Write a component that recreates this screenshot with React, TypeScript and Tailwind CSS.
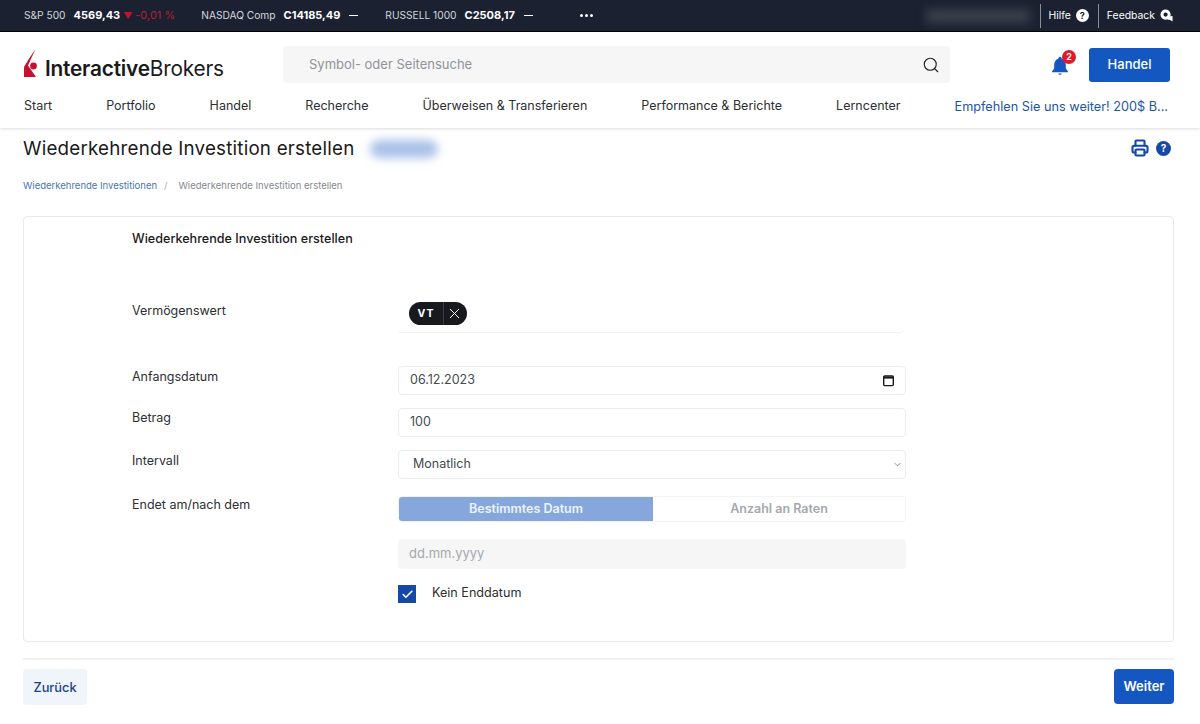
import { Search, Printer, Check, ChevronDown, X } from 'lucide-react';

const navItems = ['Start', 'Portfolio', 'Handel', 'Recherche', 'Überweisen & Transferieren', 'Performance & Berichte', 'Lerncenter'];

function Ticker({ name, value, className }: { name: string; value: string; className?: string }) {
  return (
    <div className={`flex items-center ${className ?? ''}`}>
      <span className="text-[10.2px] text-[#d5d8de]">{name}</span>
      <span className="ml-[8px] font-bold text-white">{value}</span>
    </div>
  );
}

function Logo() {
  return (
    <div className="flex items-end">
      <svg width="14" height="29" viewBox="0 0 14 29" className="mb-[3px] mr-[7px]">
        <path d="M11.5 0 L4.5 10.5 L0 18 L0 28 L12 28 L4 16.5 Z" fill="#c8102e" />
        <circle cx="9.5" cy="17" r="3.4" fill="#c8102e" />
      </svg>
      <span className="text-[20.8px] leading-[24px] tracking-[-0.2px] text-[#1a1a1a]">
        <span className="font-semibold">Interactive</span>Brokers
      </span>
    </div>
  );
}

function Field({ children, className }: { children: React.ReactNode; className?: string }) {
  return (
    <div className={`flex h-[29px] w-[508px] items-center rounded-[4px] border border-[#eceded] bg-white text-[12.5px] text-[#444a52] ${className ?? ''}`}>
      {children}
    </div>
  );
}

export default function App() {
  return (
    <div className="flex h-[724px] w-[1200px] flex-col overflow-hidden bg-white font-['Inter','Liberation_Sans',sans-serif]">
      <div className="flex h-[32px] shrink-0 items-center border-b border-black bg-[#1b2130] pl-[24px] pr-[27px] text-[11px]">
        <Ticker name="S&P 500" value="4569,43" />
        <span className="ml-[3px] text-[9px] text-[#c8102e]">▼</span>
        <span className="ml-[3px] text-[#b3202f]">-0,01 %</span>
        <Ticker name="NASDAQ Comp" value="C14185,49" className="ml-[26px]" />
        <span className="ml-[9px] h-[1px] w-[9px] bg-white" />
        <Ticker name="RUSSELL 1000" value="C2508,17" className="ml-[27px]" />
        <span className="ml-[9px] h-[1px] w-[9px] bg-white" />
        <div className="ml-[47px] flex gap-[2px]">
          <span className="size-[3px] rounded-full bg-white" />
          <span className="size-[3px] rounded-full bg-white" />
          <span className="size-[3px] rounded-full bg-white" />
        </div>
        <div className="ml-auto h-[14px] w-[104px] rounded-sm bg-[#3a3f4b] blur-[5px]" />
        <div className="ml-[10px] flex h-[24px] items-center border-l border-[#8a8e97] pl-[8px] text-[10.4px] text-white">
          Hilfe
          <span className="ml-[5px] flex size-[13px] items-center justify-center rounded-full bg-white text-[9px] font-bold text-[#1b2130]">?</span>
        </div>
        <div className="ml-[9px] flex h-[24px] items-center border-l border-[#8a8e97] pl-[8px] text-[10.4px] text-white">
          Feedback
          <svg width="13" height="13" viewBox="0 0 14 14" className="ml-[5px]">
            <path d="M6 0.5a5.5 5.5 0 1 0 0 11a5.5 5.5 0 0 0 0-11Zm0 3.2a2.3 2.3 0 1 1 0 4.6a2.3 2.3 0 0 1 0-4.6Z" fill="#fff" fillRule="evenodd" />
            <path d="M9.5 8 L13.5 7.5 L13.5 13.5 L10.5 11.5 L8 11.5 Z" fill="#fff" />
          </svg>
        </div>
      </div>

      <header className="flex h-[96px] shrink-0 flex-col pl-[24px] pr-[30px] shadow-[0_1px_3px_rgba(0,0,0,0.14)]">
        <div className="flex h-[64px] shrink-0 items-center pt-[1px]">
          <div className="w-[259px]">
            <Logo />
          </div>
          <div className="flex h-[37px] w-[667px] items-center rounded-[4px] bg-[#f6f6f7] pl-[26px] pr-[10px] text-[13px] text-[#8f9399]">
            Symbol- oder Seitensuche
            <Search size={18} strokeWidth={1.5} className="ml-auto text-[#222]" />
          </div>
          <div className="relative ml-[100px] mt-[1px]">
            <svg width="20" height="21" viewBox="0 0 24 24" fill="#1557c0">
              <path d="M12 1.5a2 2 0 0 0-2 2v.4C6.9 4.8 5 7.6 5 11v4.5L2.5 19v1h19v-1L19 15.5V11c0-3.4-1.9-6.2-5-7.1v-.4a2 2 0 0 0-2-2Z" />
              <path d="M9.8 21.5a2.3 2.3 0 0 0 4.4 0Z" />
            </svg>
            <span className="absolute -right-[6px] -top-[5px] flex size-[14px] items-center justify-center rounded-full bg-[#d81e2c] text-[9px] font-semibold text-white">2</span>
          </div>
          <button className="ml-auto h-[34px] w-[81px] rounded-[3px] bg-[#1557c0] text-[13px] font-medium text-white">Handel</button>
        </div>
        <nav className="mt-[1px] flex items-center text-[12.5px] text-[#2c2f33]">
          <div className="flex gap-[54px]">
            {navItems.map((item) => (
              <span key={item}>{item}</span>
            ))}
          </div>
          <span className="ml-auto mr-[2px] text-[12.7px] text-[#1a56a8]">Empfehlen Sie uns weiter! 200$ B...</span>
        </nav>
      </header>

      <main className="flex min-h-0 flex-1 flex-col pl-[23px] pr-[26px]">
        <div className="mt-[10px] flex h-[22px] shrink-0 items-center">
          <h1 className="text-[18.8px] font-normal tracking-[0.2px] text-[#1a1a1a]">Wiederkehrende Investition erstellen</h1>
          <div className="ml-[16px] h-[18px] w-[68px] rounded-full bg-[#a9c1e8] blur-[5px]" />
          <Printer size={18} strokeWidth={2.8} className="mb-[2px] ml-auto text-[#1449a8]" />
          <span className="mb-[2px] ml-[7px] mr-[3px] flex size-[15px] items-center justify-center rounded-full bg-[#1449a8] text-[10px] font-bold text-white">?</span>
        </div>

        <div className="mt-[19px] flex shrink-0 items-center text-[9.5px]">
          <span className="text-[#4a74b4]">Wiederkehrende Investitionen</span>
          <span className="ml-[7px] text-[#a9adb3]">/</span>
          <span className="ml-[11px] text-[#85898f]">Wiederkehrende Investition erstellen</span>
        </div>

        <section className="mt-[23px] h-[426px] shrink-0 rounded-[4px] border border-[#e8e9eb] pl-[108px] pt-[13px] text-[12.5px] text-[#2c2f33]">
          <h2 className="text-[12.6px] font-medium text-[#1a1a1a]">Wiederkehrende Investition erstellen</h2>

          <div className="mt-[51px] grid grid-cols-[266px_508px]">
            <span className="pt-[2px]">Vermögenswert</span>
            <div className="h-[32px] w-[506px] rounded-[4px] pl-[11px] shadow-[0_1px_1px_rgba(0,0,0,0.06)]">
              <div className="mt-[2px] flex h-[23px] w-[58px] items-center rounded-full bg-[#17191f] text-white">
                <span className="w-[35px] border-r border-[#3a3d44] text-center text-[10.5px] font-bold tracking-[1px] leading-[23px]">VT</span>
                <X size={17} strokeWidth={1.4} className="ml-[2px]" />
              </div>
            </div>

            <span className="mt-[36px]">Anfangsdatum</span>
            <Field className="mt-[34px] pl-[11px] pr-[10px]">
              06.12.2023
              <svg width="13" height="13" viewBox="0 0 13 13" className="ml-auto" fill="none" stroke="#1a1a1a" strokeWidth="1.4">
                <rect x="1.7" y="2" width="9.6" height="9.6" rx="1" />
                <path d="M1.7 3.6h9.6" strokeWidth="2" />
              </svg>
            </Field>

            <span className="mt-[14px]">Betrag</span>
            <Field className="mt-[13px] pl-[11px]">100</Field>

            <span className="mt-[15px]">Intervall</span>
            <Field className="mt-[13px] pl-[14px] pr-[2px]">
              Monatlich
              <ChevronDown size={11} strokeWidth={1.5} className="ml-auto text-[#666]" />
            </Field>

            <span className="mt-[17px]">Endet am/nach dem</span>
            <div className="mt-[17px] flex h-[26px] w-[508px] overflow-hidden rounded-[4px] border border-[#f3f3f4] text-[12.5px] font-semibold">
              <div className="flex w-[254px] items-center justify-center bg-[#85a7dc] text-[#eef3fb]">Bestimmtes Datum</div>
              <div className="flex flex-1 items-center justify-center bg-white text-[#a5a8ad]">Anzahl an Raten</div>
            </div>

            <span />
            <div className="mt-[17px] flex h-[30px] w-[508px] items-center rounded-[4px] bg-[#f6f6f7] pl-[11px] text-[13px] text-[#a5a8ad]">dd.mm.yyyy</div>

            <span />
            <div className="mt-[16px] flex items-center">
              <span className="flex size-[18px] items-center justify-center bg-[#1449a8]">
                <Check size={13} strokeWidth={3} className="text-white" />
              </span>
              <span className="ml-[16px] -mt-[2px] text-[12.6px]">Kein Enddatum</span>
            </div>
          </div>
        </section>

        <div className="mt-[16px] flex shrink-0 items-start justify-between border-t-2 border-[#f1f2f3] pt-[9px]">
          <button className="h-[36px] w-[64px] rounded-[4px] bg-[#f0f4fb] text-[12.8px] font-medium text-[#1e3f8c]">Zurück</button>
          <button className="h-[35px] w-[60px] rounded-[4px] bg-[#1557c0] text-[13px] font-semibold text-white">Weiter</button>
        </div>
      </main>
    </div>
  );
}
